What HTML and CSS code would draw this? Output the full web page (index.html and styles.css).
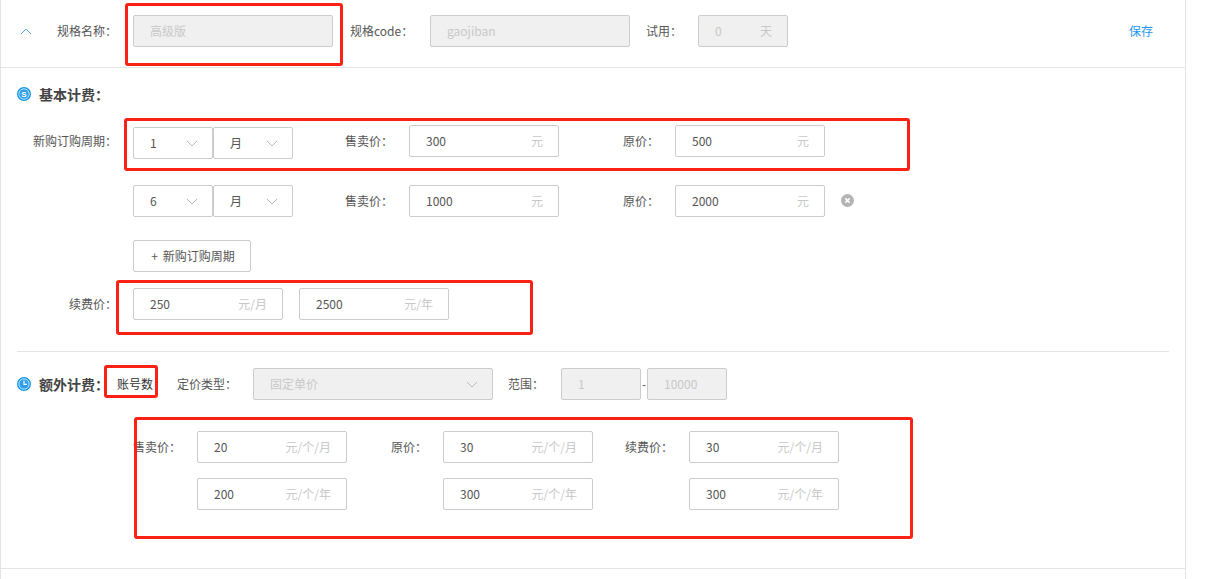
FILE: index.html
```html
<!DOCTYPE html>
<html lang="zh">
<head>
<meta charset="utf-8">
<title>规格</title>
<link rel="stylesheet" href="styles.css">
</head>
<body>
<div class="panel">
  <header class="head">
    <svg class="chev-up" viewBox="0 0 12 7"><path d="M1 6 6 1l5 5"/></svg>
    <span class="lbl w-name">规格名称：</span>
    <div class="field dis w200"><span class="val">高级版</span></div>
    <span class="lbl w-code">规格code：</span>
    <div class="field dis w200"><span class="val">gaojiban</span></div>
    <span class="lbl w-try">试用：</span>
    <div class="field dis w90"><span class="val">0</span><span class="unit">天</span></div>
    <a class="save">保存</a>
  </header>

  <section class="basic">
    <h3 class="title">
      <svg class="ico" viewBox="0 0 14 14"><circle cx="7" cy="7" r="7" fill="#1296ea"/><circle cx="7" cy="7" r="5.2" fill="#2f9fee" stroke="#d5edfc" stroke-width="0.9"/><text x="7" y="9.8" class="ico-s">S</text></svg>
      基本计费：
    </h3>
    <div class="row r-first">
      <span class="side">新购订购周期：</span>
      <div class="sel-pair low">
        <div class="field sel w80"><span class="val">1</span><svg class="chev" viewBox="0 0 12 7"><path d="M1 1l5 5 5-5"/></svg></div>
        <div class="field sel w80"><span class="val">月</span><svg class="chev" viewBox="0 0 12 7"><path d="M1 1l5 5 5-5"/></svg></div>
      </div>
      <span class="lbl w-sell">售卖价：</span>
      <div class="field w150"><span class="val">300</span><span class="unit">元</span></div>
      <span class="lbl w-orig">原价：</span>
      <div class="field w150"><span class="val">500</span><span class="unit">元</span></div>
    </div>
    <div class="row r-second">
      <span class="side"></span>
      <div class="sel-pair">
        <div class="field sel w80"><span class="val">6</span><svg class="chev" viewBox="0 0 12 7"><path d="M1 1l5 5 5-5"/></svg></div>
        <div class="field sel w80"><span class="val">月</span><svg class="chev" viewBox="0 0 12 7"><path d="M1 1l5 5 5-5"/></svg></div>
      </div>
      <span class="lbl w-sell">售卖价：</span>
      <div class="field w150"><span class="val">1000</span><span class="unit">元</span></div>
      <span class="lbl w-orig">原价：</span>
      <div class="field w150"><span class="val">2000</span><span class="unit">元</span></div>
      <svg class="del" viewBox="0 0 13 13"><circle cx="6.5" cy="6.5" r="6.5" fill="#b4b4b4"/><path d="M4.4 4.4l4.2 4.2M8.6 4.4 4.4 8.6" stroke="#fff" stroke-width="1.5"/></svg>
    </div>
    <div class="row r-add">
      <span class="side"></span>
      <button class="add">+ 新购订购周期</button>
    </div>
    <div class="row r-renew">
      <span class="side">续费价：</span>
      <div class="field w150"><span class="val">250</span><span class="unit">元/月</span></div>
      <div class="field w150 gap16"><span class="val">2500</span><span class="unit">元/年</span></div>
    </div>
  </section>

  <section class="extra">
    <div class="row r-extra">
      <h3 class="title t-extra">
        <svg class="ico" viewBox="0 0 14 14"><circle cx="7" cy="7" r="7" fill="#1296ea"/><circle cx="7" cy="7" r="5.2" fill="#2f9fee" stroke="#d5edfc" stroke-width="0.9"/><path d="M7 3.8v3.6h3" fill="none" stroke="#fff" stroke-width="1.2"/></svg>
        额外计费：
      </h3>
      <span class="metric">账号数</span>
      <span class="lbl w-type">定价类型：</span>
      <div class="field dis sel w240"><span class="val">固定单价</span><svg class="chev" viewBox="0 0 12 7"><path d="M1 1l5 5 5-5"/></svg></div>
      <span class="lbl w-range">范围：</span>
      <div class="field dis w80"><span class="val">1</span></div>
      <span class="dash">-</span>
      <div class="field dis w80"><span class="val">10000</span></div>
    </div>
    <div class="row r-p1">
      <span class="lbl w-s2">售卖价：</span>
      <div class="field w150"><span class="val">20</span><span class="unit">元/个/月</span></div>
      <span class="lbl w-o2">原价：</span>
      <div class="field w150"><span class="val">30</span><span class="unit">元/个/月</span></div>
      <span class="lbl w-r2">续费价：</span>
      <div class="field w150"><span class="val">30</span><span class="unit">元/个/月</span></div>
    </div>
    <div class="row r-p2">
      <div class="field w150"><span class="val">200</span><span class="unit">元/个/年</span></div>
      <div class="field w150 gap96"><span class="val">300</span><span class="unit">元/个/年</span></div>
      <div class="field w150 gap96"><span class="val">300</span><span class="unit">元/个/年</span></div>
    </div>
  </section>
  <div class="foot"></div>
</div>

<i class="mark m1"></i>
<i class="mark m2"></i>
<i class="mark m3"></i>
<i class="mark m4"></i>
<i class="mark m5"></i>
</body>
</html>
```
FILE: styles.css
```css
* { box-sizing: border-box; }
html, body { margin: 0; height: 579px; overflow: hidden; background: #fff; }
body {
  position: relative;
  font: 12px/32px "Noto Sans CJK SC", "Open Sans", sans-serif;
  color: #555;
}
.panel {
  width: 1186px;
  height: 579px;
  border-left: 1px solid #e4e4e4;
  border-right: 1px solid #e4e4e4;
}
.head {
  display: flex;
  align-items: center;
  height: 68px;
  padding: 0 32px 5px 19px;
  border-bottom: 1px solid #e4e4e4;
}
.chev-up { width: 12px; height: 7px; margin-right: 25px; fill: none; stroke: #5aa5e6; stroke-width: 1; }
.lbl { flex: none; white-space: nowrap; }
.w-name { width: 76px; }
.w-code { width: 80px; margin-left: 17px; }
.w-try { width: 52px; margin-left: 16px; }
.save { margin-left: auto; color: #1e96ee; }
.field {
  flex: none;
  display: flex;
  justify-content: space-between;
  align-items: center;
  height: 32px;
  padding: 0 15px 0 16px;
  border: 1px solid #ccc;
  border-radius: 2px;
  background: #fff;
  color: #555;
}
.dis { background: #f0f0f0; color: #c8c8c8; }
.unit { color: #c8c8c8; }
.w80 { width: 80px; }
.w90 { width: 90px; }
.w150 { width: 150px; }
.w200 { width: 200px; }
.w240 { width: 240px; }
.sel { padding-right: 14px; }
.chev { width: 12px; height: 7px; margin-top: 1px; fill: none; stroke: #bbb; stroke-width: 1; }
.title {
  display: flex;
  align-items: center;
  margin: 0;
  font-size: 14px;
  font-weight: 700;
  color: #444;
  line-height: 20px;
}
.ico { width: 14px; height: 14px; margin-right: 8px; flex: none; }
.ico-s { font: 700 8px "Liberation Sans", sans-serif; fill: #fff; text-anchor: middle; }
.basic { padding: 16px 16px 0; height: 283px; }
.row { display: flex; align-items: flex-start; }
.side { flex: none; width: 100px; margin-right: 16px; text-align: right; white-space: nowrap; }
.basic .row .lbl, .side { line-height: 32px; }
.r-first { margin-top: 21px; }
.r-second { margin-top: 26px; }
.r-add { margin-top: 23px; }
.r-renew { margin-top: 16px; }
.sel-pair { display: flex; }
.low { margin-top: 2px; }
.w-sell { width: 64px; margin-left: 52px; }
.w-orig { width: 52px; margin-left: 64px; }
.del { width: 13px; height: 13px; margin: 9px 0 0 16px; flex: none; }
.add {
  width: 118px;
  height: 32px;
  padding: 0 0 0 2px;
  border: 1px solid #ccc;
  border-radius: 2px;
  background: #fff;
  font: inherit;
  line-height: 30px;
  word-spacing: 2px;
  color: #555;
}
.gap16 { margin-left: 16px; }
.extra { margin: 0 16px; border-top: 1px solid #e4e4e4; height: 217px; }
.r-extra { margin-top: 16px; align-items: center; height: 32px; }
.t-extra { width: 100px; flex: none; white-space: nowrap; }
.metric { width: 36px; color: #333; flex: none; white-space: nowrap; }
.w-type { width: 76px; margin-left: 24px; }
.w-range { width: 53px; margin-left: 15px; }
.dash { width: 6px; text-align: center; flex: none; }
.r-p1 { margin-top: 31px; padding-left: 116px; }
.w-s2 { width: 64px; }
.w-o2 { width: 52px; margin-left: 44px; }
.w-r2 { width: 64px; margin-left: 32px; }
.r-p2 { margin-top: 15px; padding-left: 180px; }
.gap96 { margin-left: 96px; }
.foot { border-top: 1px solid #e4e4e4; }
.mark {
  position: absolute;
  border: 3px solid #fb2115;
  border-radius: 3px;
  pointer-events: none;
}
.m1 { left: 125px; top: 3px; width: 218px; height: 63px; }
.m2 { left: 124px; top: 118px; width: 786px; height: 53px; }
.m3 { left: 116px; top: 280px; width: 417px; height: 55px; }
.m4 { left: 104px; top: 365px; width: 54px; height: 33px; }
.m5 { left: 134px; top: 417px; width: 779px; height: 122px; }
```
